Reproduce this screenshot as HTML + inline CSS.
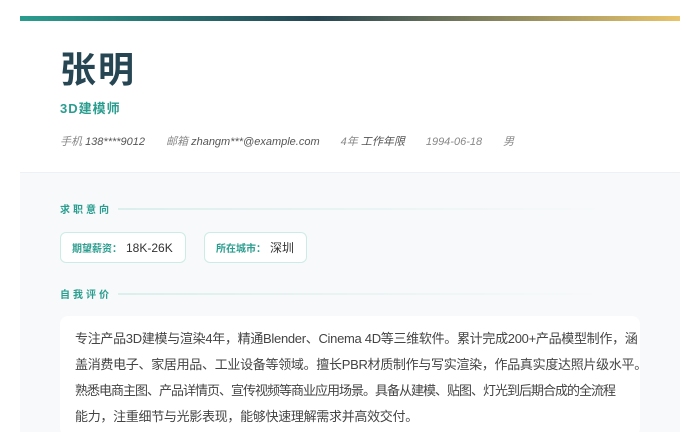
<!DOCTYPE html>
<html><head><meta charset="utf-8"><style>
*{margin:0;padding:0;box-sizing:border-box}
body{width:700px;height:400px;overflow:hidden;background:#fff;font-family:"Liberation Sans","Noto Sans CJK SC",sans-serif}
.wrap{position:absolute;left:20px;top:16px;width:660px;height:400px;background:#fff}
.bar{height:5px;background:linear-gradient(90deg,#2a9d8f 0%,#264653 45%,#e9c46a 100%)}
.name{position:absolute;left:40px;top:32px;font-size:36px;font-weight:bold;color:#264653;letter-spacing:2px;line-height:44px}
.title{position:absolute;left:40px;top:82px;font-size:13px;font-weight:bold;color:#2a9d8f;letter-spacing:1px}
.meta{position:absolute;left:40px;top:117px;font-size:11px;color:#888;font-style:italic;white-space:nowrap}
.meta span{margin-right:21px}
.meta b{font-weight:normal;color:#555}
.gray{position:absolute;left:0;top:156px;width:660px;height:260px;background:#f7f9fa;border-top:1px solid #eef1f3}
.sec{position:absolute;left:40px;font-size:10px;font-weight:bold;color:#2a9d8f;letter-spacing:3px;display:flex;align-items:center;width:540px}
.sec i{flex:1;height:2px;margin-left:6px;background:linear-gradient(90deg,#dcefec,rgba(220,239,236,0))}
.tag{position:absolute;top:216px;height:31px;background:#fff;border:1px solid #cdebe6;border-radius:6px;font-size:12px;color:#333;display:flex;align-items:center;padding:0 12px 0 11px;white-space:nowrap}
.tag em{font-style:normal;font-size:10px;font-weight:bold;color:#2a9d8f;margin-right:4px}
.card{position:absolute;left:40px;top:300px;width:580px;height:120px;background:#fff;border-radius:8px;padding:10px 4px 10px 15px;font-size:13px;line-height:26px;color:#444;letter-spacing:-0.3px}
.card span{display:block;white-space:nowrap}
</style></head><body>
<div class="wrap">
<div class="bar"></div>
<div class="name">张明</div>
<div class="title">3D建模师</div>
<div class="meta"><span>手机 <b>138****9012</b></span><span>邮箱 <b>zhangm***@example.com</b></span><span>4年 <b>工作年限</b></span><span>1994-06-18</span><span>男</span></div>
<div class="gray"></div>
<div class="sec" style="top:185px">求职意向<i></i></div>
<div class="tag" style="left:40px"><em>期望薪资：</em>18K-26K</div>
<div class="tag" style="left:184px"><em>所在城市：</em>深圳</div>
<div class="sec" style="top:270px">自我评价<i></i></div>
<div class="card"><span>专注产品3D建模与渲染4年，精通Blender、Cinema 4D等三维软件。累计完成200+产品模型制作，涵</span><span>盖消费电子、家居用品、工业设备等领域。擅长PBR材质制作与写实渲染，作品真实度达照片级水平。</span><span style="letter-spacing:-1px">熟悉电商主图、产品详情页、宣传视频等商业应用场景。具备从建模、贴图、灯光到后期合成的全流程</span><span>能力，注重细节与光影表现，能够快速理解需求并高效交付。</span></div>
</div>
</body></html>
